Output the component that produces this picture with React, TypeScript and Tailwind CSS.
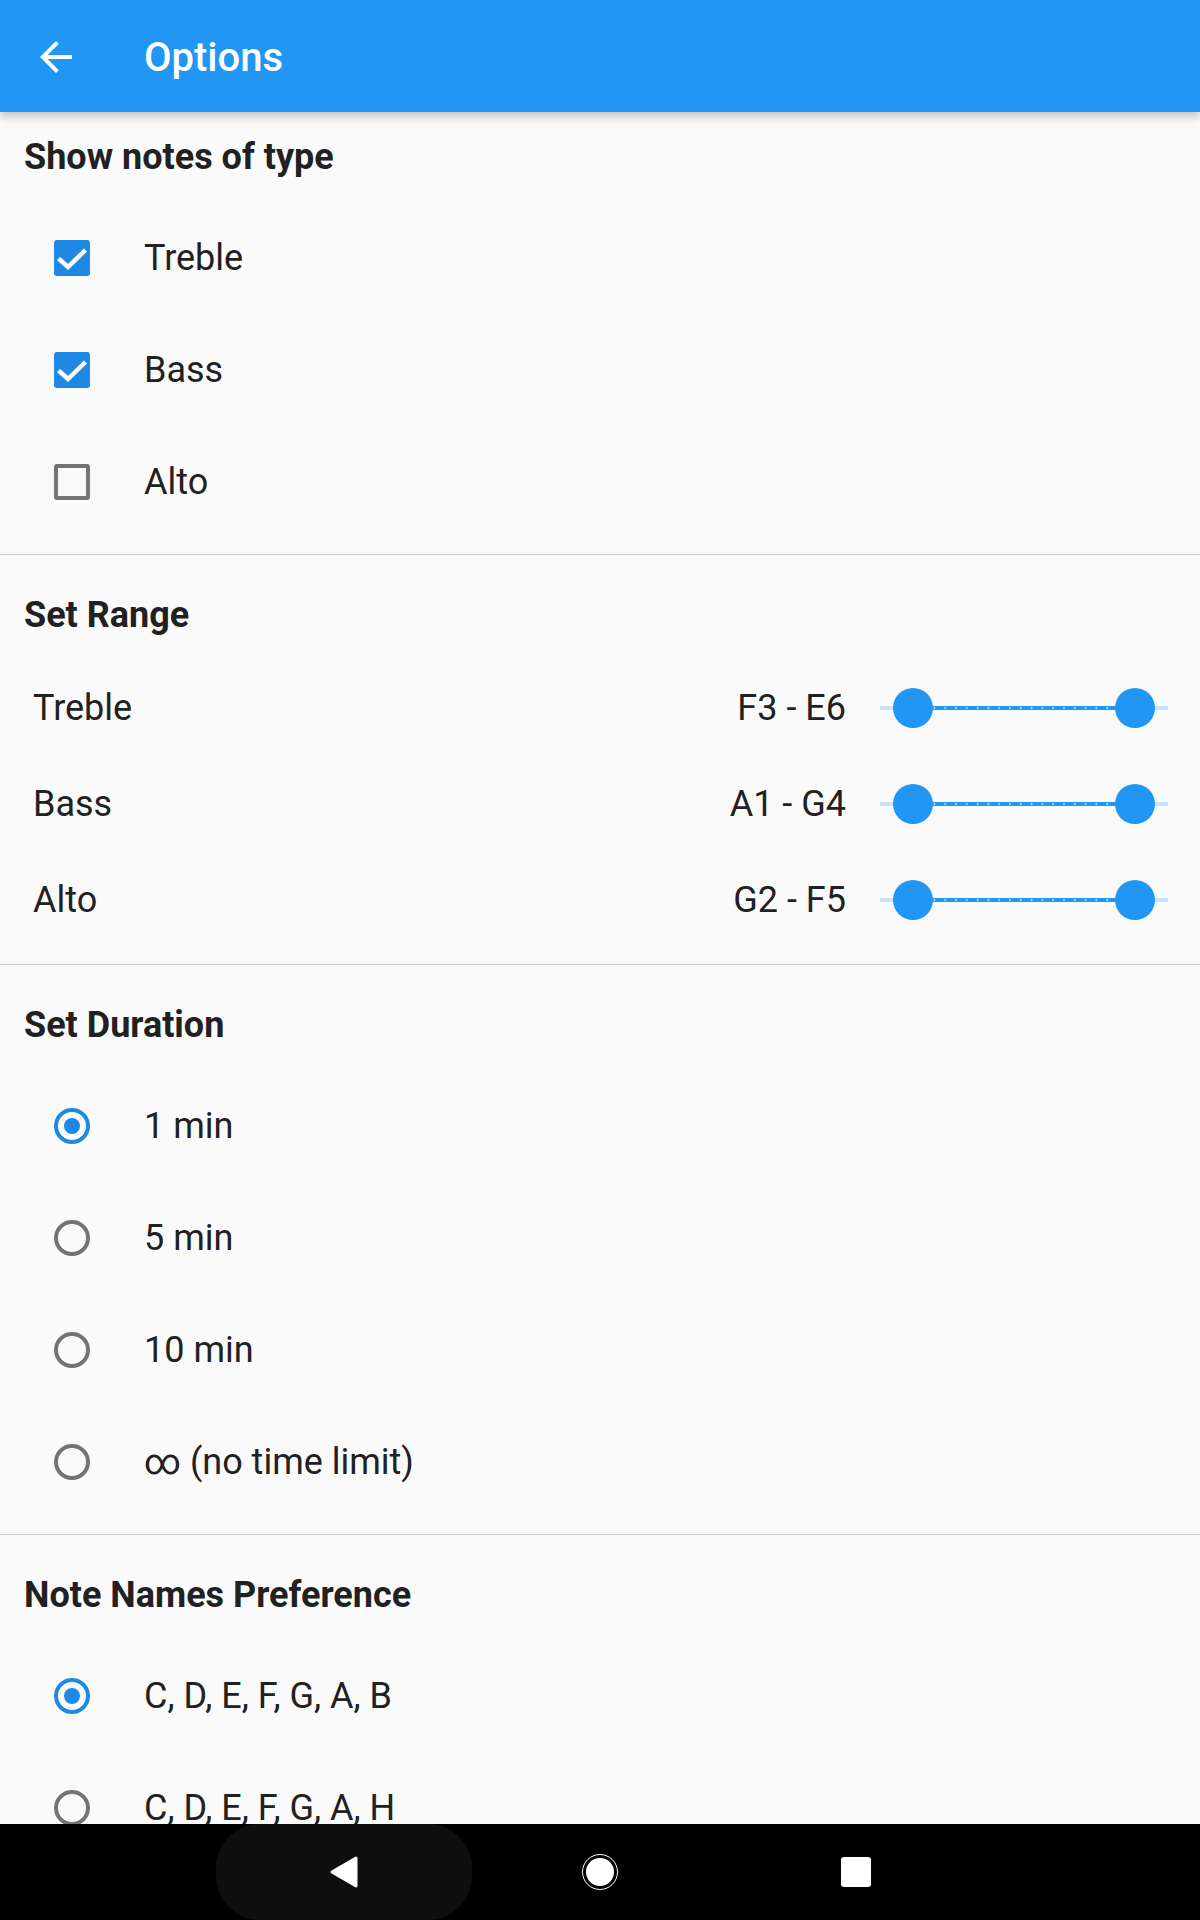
import { useState } from 'react'

const BLUE = '#2196F3'

function Checkbox({ checked }: { checked: boolean }) {
  if (!checked) {
    return <div className="h-[36px] w-[36px] rounded-[3px] border-[4px] border-[#737373]" />
  }
  return (
    <div className="flex h-[36px] w-[36px] items-center justify-center rounded-[3px] bg-[#1E88E5]">
      <svg width="36" height="36" viewBox="0 0 36 36">
        <path d="M4.5 18.5 L14 27 L31.5 10" fill="none" stroke="#fff" strokeWidth="4.5" />
      </svg>
    </div>
  )
}

function Radio({ selected }: { selected: boolean }) {
  return (
    <div
      className={`flex h-[36px] w-[36px] items-center justify-center rounded-full border-[4px] ${
        selected ? 'border-[#1E88E5]' : 'border-[#737373]'
      }`}
    >
      {selected && <div className="h-[16px] w-[16px] rounded-full bg-[#1E88E5]" />}
    </div>
  )
}

function RangeSlider() {
  const ticks = Array.from({ length: 24 }, (_, i) => 22 + i * 10.8)
  return (
    <svg width="288" height="48" viewBox="0 0 288 48" className="block">
      <rect x="0" y="22" width="288" height="4" fill="#C7E2FB" />
      <rect x="33" y="22" width="222" height="4" fill={BLUE} />
      {ticks.map((x) => (
        <circle key={x} cx={x} cy="24" r="1.1" fill="#BBDEFB" />
      ))}
      <circle cx="33" cy="24" r="20" fill={BLUE} />
      <circle cx="255" cy="24" r="20" fill={BLUE} />
    </svg>
  )
}

function SectionHeader({ children, first }: { children: string; first?: boolean }) {
  return (
    <h2
      className={`${first ? 'pt-[25px]' : 'pt-[40px]'} pl-[24px] text-[36px] leading-[40px] font-bold text-[#212121]`}
    >
      {children}
    </h2>
  )
}

function Divider() {
  return <div className="mt-[16px] h-px bg-[#cbcbcb]" />
}

export default function App() {
  const [types] = useState([
    { label: 'Treble', on: true },
    { label: 'Bass', on: true },
    { label: 'Alto', on: false },
  ])
  const ranges = [
    { label: 'Treble', value: 'F3 - E6' },
    { label: 'Bass', value: 'A1 - G4' },
    { label: 'Alto', value: 'G2 - F5' },
  ]
  const durations = ['1 min', '5 min', '10 min', '∞ (no time limit)']
  const names = ['C, D, E, F, G, A, B', 'C, D, E, F, G, A, H']

  return (
    <div className="flex h-[1920px] w-[1200px] flex-col bg-[#FAFAFA] font-['Roboto',sans-serif] text-[#212121]">
      <header className="relative z-10 flex h-[112px] shrink-0 items-center bg-[#2196F3] shadow-[0_4px_10px_rgba(0,0,0,0.25)]">
        <svg width="48" height="48" viewBox="0 0 24 24" className="ml-[32px] mt-[2px]">
          <path d="M20 11H7.83l5.59-5.59L12 4l-8 8 8 8 1.41-1.41L7.83 13H20v-2z" fill="#fff" />
        </svg>
        <h1 className="ml-[64px] pt-[4px] text-[40px] font-medium text-white">Options</h1>
      </header>

      <main className="flex-1 overflow-hidden">
        <SectionHeader first>Show notes of type</SectionHeader>
        <div className="mt-[25px]">
          {types.map((t) => (
            <div key={t.label} className="flex h-[112px] items-center">
              <div className="ml-[54px] w-[90px]">
                <Checkbox checked={t.on} />
              </div>
              <span className="text-[36px]">{t.label}</span>
            </div>
          ))}
        </div>
        <Divider />

        <SectionHeader>Set Range</SectionHeader>
        <div className="mt-[25px]">
          {ranges.map((r) => (
            <div key={r.label} className="flex h-[96px] items-center">
              <span className="ml-[33px] flex-1 text-[36px]">{r.label}</span>
              <span className="text-[36px]">{r.value}</span>
              <div className="ml-[34px] mr-[32px]">
                <RangeSlider />
              </div>
            </div>
          ))}
        </div>
        <Divider />

        <SectionHeader>Set Duration</SectionHeader>
        <div className="mt-[25px]">
          {durations.map((d, i) => (
            <div key={d} className="flex h-[112px] items-center">
              <div className="ml-[54px] w-[90px]">
                <Radio selected={i === 0} />
              </div>
              <span className="text-[36px]">{d}</span>
            </div>
          ))}
        </div>
        <Divider />

        <SectionHeader>Note Names Preference</SectionHeader>
        <div className="mt-[25px]">
          {names.map((n, i) => (
            <div key={n} className="flex h-[112px] items-center">
              <div className="ml-[54px] w-[90px]">
                <Radio selected={i === 0} />
              </div>
              <span className="text-[36px]">{n}</span>
            </div>
          ))}
        </div>
      </main>

      <nav className="flex h-[96px] shrink-0 bg-black pl-[216px]">
        <div className="flex w-[256px] items-center justify-center rounded-[44px] bg-[#0f0f0f]">
          <svg width="32" height="34" viewBox="0 0 32 34">
            <path d="M28 3 L4 17 L28 31 Z" fill="#fff" stroke="#fff" strokeWidth="3" strokeLinejoin="round" />
          </svg>
        </div>
        <div className="flex w-[256px] items-center justify-center">
          <div className="flex h-[36px] w-[36px] items-center justify-center rounded-full border-[1.5px] border-white">
            <div className="h-[28px] w-[28px] rounded-full bg-white" />
          </div>
        </div>
        <div className="flex w-[256px] items-center justify-center">
          <div className="h-[30px] w-[30px] rounded-[3px] bg-white" />
        </div>
      </nav>
    </div>
  )
}
